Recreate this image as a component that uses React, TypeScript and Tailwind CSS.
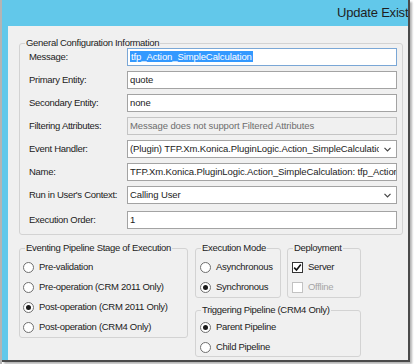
type FieldProps = {
  label: string
  value: string
  kind?: "text" | "select" | "disabled" | "focused"
  className?: string
}

function Field({ label, value, kind = "text", className = "" }: FieldProps) {
  const box =
    kind === "disabled"
      ? "border-[#c4c4c4] bg-[#f0f0f0] text-[#6d6d6d]"
      : kind === "focused"
        ? "border-[#7aa7d6] bg-white"
        : "border-[#a3a3a3] bg-white"

  return (
    <div className={`flex h-[18px] items-center ${className}`}>
      <span className="w-[98px] whitespace-nowrap">{label}</span>
      <div className={`flex h-[18px] w-[270px] items-center overflow-hidden border ${box}`}>
        <span className="min-w-0 flex-1 overflow-hidden whitespace-nowrap pl-[2px] tracking-[-0.1px]">
          {kind === "focused" ? (
            <span className="bg-[#3399ff] px-[1px] text-white">{value}</span>
          ) : (
            value
          )}
        </span>
        {kind === "select" ? (
          <svg className="mx-[5px] shrink-0" width="7" height="5" viewBox="0 0 7 5">
            <path d="M0.5 0.8 L3.5 3.8 L6.5 0.8" fill="none" stroke="#444" strokeWidth="1.2" />
          </svg>
        ) : null}
      </div>
    </div>
  )
}

function GroupBox({
  title,
  className,
  bodyClassName,
  children
}: {
  title: string
  className: string
  bodyClassName: string
  children: React.ReactNode
}) {
  return (
    <fieldset className={`rounded-[3px] border border-[#d3d3d3] ${className}`}>
      <legend className="ml-[5px] px-[1px] leading-[12px]">{title}</legend>
      <div className={bodyClassName}>{children}</div>
    </fieldset>
  )
}

function Radio({ label, checked = false }: { label: string; checked?: boolean }) {
  return (
    <div className="flex h-[20px] items-center gap-[5px]">
      <span className="flex h-[11px] w-[11px] items-center justify-center rounded-full border border-[#6f6f6f] bg-white">
        {checked ? <span className="h-[5px] w-[5px] rounded-full bg-[#1a1a1a]" /> : null}
      </span>
      <span className="whitespace-nowrap">{label}</span>
    </div>
  )
}

function Checkbox({ label, checked = false, disabled = false }: { label: string; checked?: boolean; disabled?: boolean }) {
  return (
    <div className={`flex h-[20px] items-center gap-[5px] ${disabled ? "text-[#a5a5a5]" : ""}`}>
      <span
        className={`flex h-[11px] w-[11px] items-center justify-center border bg-white ${
          disabled ? "border-[#c2c2c2]" : "border-[#333]"
        }`}
      >
        {checked ? (
          <svg width="9" height="9" viewBox="0 0 9 9">
            <path d="M1.2 4.6 L3.5 7 L7.8 1.6" fill="none" stroke="#111" strokeWidth="1.6" />
          </svg>
        ) : null}
      </span>
      <span>{label}</span>
    </div>
  )
}

export default function App() {
  return (
    <div className="flex h-[364px] w-[414px] bg-white font-['Liberation_Sans',Arial,sans-serif] text-[9.5px] tracking-[-0.3px] text-[#222]">
      <div className="h-full w-[2px] bg-[#b4b4b4]" />
      <div className="flex h-[362px] w-[408px] flex-col border-b-2 border-r-2 border-[#4a4a4a] shadow-[2px_2px_2px_rgba(0,0,0,0.3)]">
        <div className="h-[26px] overflow-hidden whitespace-nowrap bg-[#62c8ea] pl-[335px] pt-[4px] text-[13px] leading-[17px] tracking-[-0.2px] text-[#1f1f1f]">
          Update Existing Step
        </div>
        <div className="flex flex-1">
          <div className="w-[6px] bg-[#62c8ea]" />
          <div className="flex-1 bg-[#f0f0f0] pl-[11px] pt-[11px]">
            <GroupBox
              title="General Configuration Information"
              className="h-[198px] w-[384px]"
              bodyClassName="-mt-[1px] flex flex-col gap-[5px] pl-[9px]"
            >
              <Field label="Message:" value="tfp_Action_SimpleCalculation" kind="focused" />
              <Field label="Primary Entity:" value="quote" />
              <Field label="Secondary Entity:" value="none" />
              <Field
                label="Filtering Attributes:"
                value="Message does not support Filtered Attributes"
                kind="disabled"
              />
              <Field
                label="Event Handler:"
                value="(Plugin) TFP.Xm.Konica.PluginLogic.Action_SimpleCalculation"
                kind="select"
              />
              <Field
                label="Name:"
                value="TFP.Xm.Konica.PluginLogic.Action_SimpleCalculation: tfp_Action_SimpleCalculation"
              />
              <Field label="Run in User's Context:" value="Calling User" kind="select" />
              <Field label="Execution Order:" value="1" className="mt-[2px]" />
            </GroupBox>

            <div className="mt-[7px] flex gap-[7px]">
              <GroupBox
                title="Eventing Pipeline Stage of Execution"
                className="h-[96px] w-[169px]"
                bodyClassName="pl-[3px] pt-[3px]"
              >
                <Radio label="Pre-validation" />
                <Radio label="Pre-operation (CRM 2011 Only)" />
                <Radio label="Post-operation (CRM 2011 Only)" checked />
                <Radio label="Post-operation (CRM4 Only)" />
              </GroupBox>

              <div className="flex flex-col gap-[6px]">
                <div className="flex gap-[6px]">
                  <GroupBox title="Execution Mode" className="h-[56px] w-[86px]" bodyClassName="pl-[4px] pt-[3px]">
                    <Radio label="Asynchronous" />
                    <Radio label="Synchronous" checked />
                  </GroupBox>
                  <GroupBox title="Deployment" className="h-[56px] w-[74px]" bodyClassName="pl-[4px] pt-[3px]">
                    <Checkbox label="Server" checked />
                    <Checkbox label="Offline" disabled />
                  </GroupBox>
                </div>
                <GroupBox
                  title="Triggering Pipeline (CRM4 Only)"
                  className="h-[53px] w-[166px]"
                  bodyClassName="pl-[4px] pt-[1px]"
                >
                  <Radio label="Parent Pipeline" checked />
                  <Radio label="Child Pipeline" />
                </GroupBox>
              </div>
            </div>
          </div>
        </div>
      </div>
    </div>
  )
}
